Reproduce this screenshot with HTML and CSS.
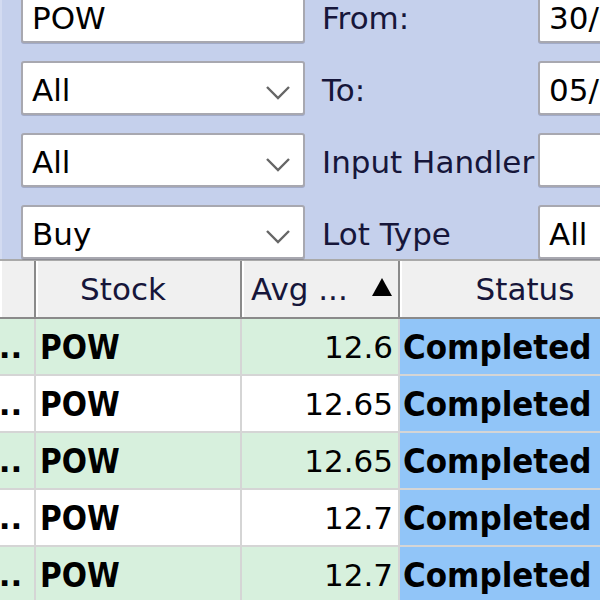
FILE: index.html
```html
<!DOCTYPE html>
<html lang="en">
<head>
    <meta charset="UTF-8">
    <title>Lot Search</title>
    <link rel="stylesheet" href="styles.css">
</head>
<body>
    <div class="filters">
        <div class="field-col">
            <div class="box">POW</div>
            <div class="box combo">All
                <svg class="chev" width="24" height="14" viewBox="0 0 24 14"><polyline points="1,1 12,12 23,1" fill="none" stroke="#666" stroke-width="2.4"/></svg>
            </div>
            <div class="box combo">All
                <svg class="chev" width="24" height="14" viewBox="0 0 24 14"><polyline points="1,1 12,12 23,1" fill="none" stroke="#666" stroke-width="2.4"/></svg>
            </div>
            <div class="box combo">Buy
                <svg class="chev" width="24" height="14" viewBox="0 0 24 14"><polyline points="1,1 12,12 23,1" fill="none" stroke="#666" stroke-width="2.4"/></svg>
            </div>
        </div>
        <div class="label-col">
            <div class="label">From:</div>
            <div class="label">To:</div>
            <div class="label">Input Handler</div>
            <div class="label">Lot Type</div>
        </div>
        <div class="field-col narrow">
            <div class="box">30/06/2023</div>
            <div class="box">05/07/2023</div>
            <div class="box"></div>
            <div class="box">All</div>
        </div>
    </div>

    <table class="grid">
        <colgroup>
            <col class="c-time">
            <col class="c-stock">
            <col class="c-avg">
            <col class="c-status">
        </colgroup>
        <thead>
            <tr>
                <th></th>
                <th class="h-stock">Stock</th>
                <th class="h-avg"><div class="sort-head"><span>Avg ...</span><span class="sort-up"></span></div></th>
                <th class="h-status">Status</th>
            </tr>
        </thead>
        <tbody>
            <tr class="alt">
                <td class="time">...</td><td class="stock">POW</td><td class="num">12.6</td><td class="status">Completed</td>
            </tr>
            <tr>
                <td class="time">...</td><td class="stock">POW</td><td class="num">12.65</td><td class="status">Completed</td>
            </tr>
            <tr class="alt">
                <td class="time">...</td><td class="stock">POW</td><td class="num">12.65</td><td class="status">Completed</td>
            </tr>
            <tr>
                <td class="time">...</td><td class="stock">POW</td><td class="num">12.7</td><td class="status">Completed</td>
            </tr>
            <tr class="alt">
                <td class="time">...</td><td class="stock">POW</td><td class="num">12.7</td><td class="status">Completed</td>
            </tr>
        </tbody>
    </table>
</body>
</html>
```

FILE: styles.css
```css
html, body {
    margin: 0;
    padding: 0;
    width: 600px;
    height: 600px;
    overflow: hidden;
    background: #fff;
    font-family: "DejaVu Sans", Verdana, sans-serif;
    font-size: 31px;
    color: #000;
}

.filters {
    display: flex;
    margin-top: -11px;
    padding-left: 19px;
    background: #c5d0ec;
    border-left: 2px solid #d3dbf1;
}

.field-col {
    display: flex;
    flex-direction: column;
    gap: 18px;
    width: 284px;
    flex-shrink: 0;
}

.field-col.narrow {
    width: 120px;
}

.box {
    box-sizing: border-box;
    height: 54px;
    display: flex;
    align-items: center;
    padding: 3px 0 0 9px;
    background: #fff;
    border: 2px solid #a8a8b0;
    border-radius: 3px;
    box-shadow: 0 1px 0 rgba(60, 60, 90, 0.25);
    white-space: nowrap;
    overflow: hidden;
}

.combo {
    justify-content: space-between;
    padding-right: 13px;
}

.chev {
    margin-top: 6px;
}

.label-col {
    display: flex;
    flex-direction: column;
    gap: 18px;
    width: 216px;
    padding-left: 17px;
    flex-shrink: 0;
}

.label {
    height: 54px;
    display: flex;
    align-items: center;
    padding-top: 3px;
    box-sizing: border-box;
    color: #16163a;
    white-space: nowrap;
}

.grid {
    table-layout: fixed;
    border-collapse: separate;
    border-spacing: 0;
    width: 680px;
    border-top: 2px solid #a9a9a9;
}

.c-time { width: 36px; }
.c-stock { width: 206px; }
.c-avg { width: 158px; }
.c-status { width: 280px; }

.grid th {
    font-weight: normal;
    line-height: 56px;
    padding: 0;
    background: #f0f0f0;
    border-right: 2px solid #8a8a8a;
    border-bottom: 2px solid #8a8a8a;
    box-shadow: inset 2px 0 0 #fff;
    white-space: nowrap;
    overflow: hidden;
    color: #16163a;
}

.h-stock {
    text-align: center;
    padding-right: 30px !important;
}

.h-status {
    text-align: center;
    padding-right: 28px !important;
}

.sort-head {
    display: flex;
    align-items: center;
    justify-content: space-between;
    padding: 0 6px 0 9px;
}

.sort-up {
    width: 0;
    height: 0;
    border-left: 10px solid transparent;
    border-right: 10px solid transparent;
    border-bottom: 18px solid #000;
    margin-top: -4px;
}

.grid td {
    box-sizing: border-box;
    height: 57px;
    line-height: 53px;
    padding: 2px 0 0;
    background: #fff;
    border-right: 2px solid #d5d5d5;
    border-bottom: 2px solid #d5d5d5;
    white-space: nowrap;
    overflow: hidden;
}

.grid tr.alt td {
    background: #d7f0dd;
}

.grid td.time {
    font-weight: bold;
    text-indent: -13px;
}

.grid td.stock {
    font-family: "DejaVu Sans Condensed", "DejaVu Sans", sans-serif;
    font-stretch: condensed;
    font-weight: bold;
    font-size: 33px;
    padding-left: 4px;
}

.grid td.num {
    text-align: right;
    padding-right: 5px;
}

.grid td.status,
.grid tr.alt td.status {
    font-family: "DejaVu Sans Condensed", "DejaVu Sans", sans-serif;
    font-stretch: condensed;
    font-weight: bold;
    font-size: 34.5px;
    background: #91c5f8;
    padding-left: 3px;
}
```
